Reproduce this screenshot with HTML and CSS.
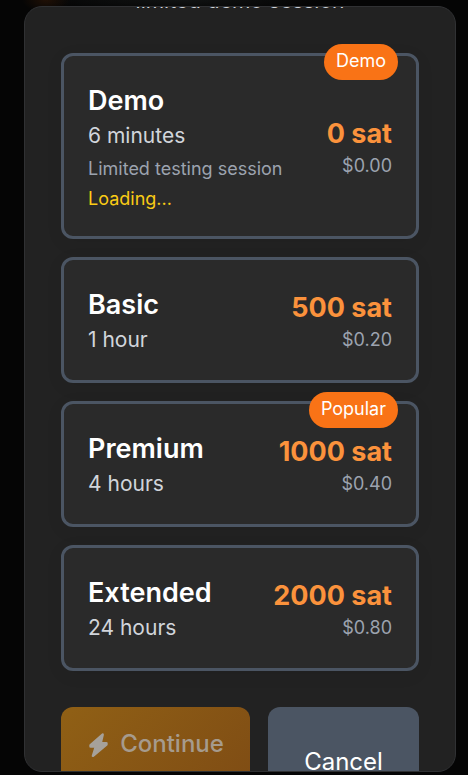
FILE: index.html
```html
<!DOCTYPE html>
<html lang="en">
<head>
<meta charset="utf-8">
<title>Choose a session</title>
<link rel="stylesheet" href="styles.css">
</head>
<body>
<main class="modal">
  <p class="intro">limited demo session</p>
  <section class="plans">
    <article class="plan">
      <span class="badge">Demo</span>
      <div>
        <h3 class="name">Demo</h3>
        <p class="duration">6 minutes</p>
        <p class="note">Limited testing session</p>
        <p class="note loading">Loading...</p>
      </div>
      <div class="cost"><p class="price">0 sat</p><p class="usd">$0.00</p></div>
    </article>
    <article class="plan">
      <div><h3 class="name">Basic</h3><p class="duration">1 hour</p></div>
      <div class="cost"><p class="price">500 sat</p><p class="usd">$0.20</p></div>
    </article>
    <article class="plan">
      <span class="badge">Popular</span>
      <div><h3 class="name">Premium</h3><p class="duration">4 hours</p></div>
      <div class="cost"><p class="price">1000 sat</p><p class="usd">$0.40</p></div>
    </article>
    <article class="plan">
      <div><h3 class="name">Extended</h3><p class="duration">24 hours</p></div>
      <div class="cost"><p class="price">2000 sat</p><p class="usd">$0.80</p></div>
    </article>
  </section>
  <div class="actions">
    <button class="btn continue" disabled>
      <svg class="bolt" viewBox="0 0 20 26" aria-hidden="true"><path d="M14.6 2.6 2.6 13.2V14.4H8L5 23.8 18.4 12.4V11.2H12.6Z"/></svg>
      <span>Continue</span>
    </button>
    <button class="btn cancel">Cancel</button>
  </div>
</main>
</body>
</html>
```
FILE: styles.css
```css
* { box-sizing: border-box; margin: 0; }

body {
  height: 775px;
  padding: 6px 12px 3px 24px;
  overflow: hidden;
  background:
    radial-gradient(ellipse 24px 12px at 46px 0, #201005, transparent),
    radial-gradient(ellipse 140px 10px at 180px 0, #111313, transparent),
    #050505;
  font-family: Inter, "Liberation Sans", sans-serif;
}

.modal {
  height: 766px;
  overflow: hidden;
  padding: 0 36px;
  border: 1px solid #303133;
  border-radius: 18px;
  background: #222222;
}

.intro {
  height: 30px;
  margin-top: -21px;
  font-size: 21px;
  line-height: 30px;
  text-align: center;
  white-space: nowrap;
  color: #d1d5db;
}

.plans {
  display: grid;
  gap: 18px;
  margin-top: 37px;
}

.plan {
  position: relative;
  display: flex;
  justify-content: space-between;
  align-items: center;
  padding: 24px;
  border: 3px solid #4b5563;
  border-radius: 12px;
  background: #2a2a2a;
  box-shadow: 0 4px 18px rgba(0, 0, 0, 0.06);
}

.badge {
  position: absolute;
  top: -12px;
  right: 18px;
  padding: 5px 12px 7px;
  border-radius: 18px;
  background: #f97316;
  color: #fff;
  font-size: 18px;
  line-height: 24px;
}

.name {
  font-size: 27px;
  font-weight: 600;
  line-height: 42px;
  color: #fff;
}

.duration {
  margin: -1px 0 1px;
  font-size: 21px;
  line-height: 30px;
  color: #d1d5db;
}

.note {
  padding-top: 5px;
  padding-bottom: 1px;
  font-size: 18px;
  line-height: 24px;
  color: #9ca3af;
}

.loading { color: #facc15; }

.cost { text-align: right; }

.price {
  font-size: 27px;
  font-weight: 700;
  line-height: 42px;
  color: #fb923c;
}

.usd {
  margin: -1px 0 1px;
  font-size: 18px;
  line-height: 24px;
  color: #9ca3af;
}

.actions {
  display: flex;
  gap: 18px;
  margin-top: 36px;
}

.btn {
  display: flex;
  justify-content: center;
  height: 110px;
  padding: 19px 0 17px;
  border: 0;
  border-radius: 12px;
  font: 400 24px/36px Inter, "Liberation Sans", sans-serif;
  color: #fff;
}

.continue {
  width: 189px;
  gap: 12px;
  padding-left: 1px;
  background: linear-gradient(135deg, #906015, #7d4a14);
  font-weight: 500;
  color: #a69b8d;
}

.bolt {
  width: 20px;
  height: 26px;
  margin-top: 6px;
  fill: #a6a19a;
  stroke: #a6a19a;
  stroke-width: 2.6;
  stroke-linejoin: round;
}

.cancel {
  width: 151px;
  align-items: center;
  padding: 18px 0;
  background: #4b5563;
}
```
